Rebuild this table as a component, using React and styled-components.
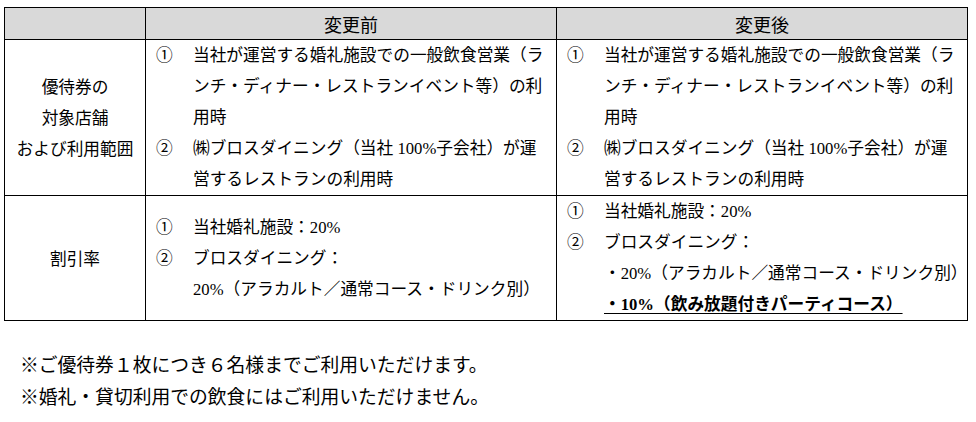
import styled, { createGlobalStyle } from "styled-components";

const GlobalStyle = createGlobalStyle`
  body {
    margin: 0;
    background: #fff;
    color: #000;
    font-family: "Liberation Serif", "Noto Sans CJK JP", serif;
  }
`;

const Page = styled.div`
  padding: 7px 0 0 4px;
`;

const Table = styled.div`
  display: grid;
  grid-template-columns: 141px 411px 411px;
  grid-template-rows: 32px 156px 125px;
  width: max-content;
  border-left: 1px solid #000;
  border-top: 1px solid #000;
`;

const Cell = styled.div`
  border-right: 1px solid #000;
  border-bottom: 1px solid #000;
  font-size: 16.7px;
  line-height: 31px;
  display: flex;
  flex-direction: column;
  justify-content: ${(p) => (p.$middle ? "center" : "flex-start")};
  padding-left: 10px;
`;

const HeadCell = styled.div`
  border-right: 1px solid #000;
  border-bottom: 1px solid #000;
  background: #d9d9d9;
  font-size: 18px;
  display: flex;
  align-items: center;
  justify-content: center;
  padding-top: 1px;
`;

const LabelCell = styled.div`
  border-right: 1px solid #000;
  border-bottom: 1px solid #000;
  font-size: 16.7px;
  line-height: 31px;
  display: flex;
  flex-direction: column;
  align-items: center;
  justify-content: center;
  padding-top: 2px;
`;

const Item = styled.div`
  display: grid;
  grid-template-columns: 37px 1fr;
`;

const Num = styled.span`
  white-space: nowrap;
`;

const Line = styled.span`
  display: block;
  white-space: nowrap;
  font-weight: ${(p) => (p.$bold ? 700 : 400)};
  text-decoration: ${(p) => (p.$bold ? "underline" : "none")};
  text-underline-offset: 3px;
  text-decoration-thickness: 1px;
`;

const Notes = styled.div`
  margin-top: 29px;
  padding-left: 16px;
  font-size: 18.8px;
  line-height: 32px;
`;

const scopeItems = [
  {
    n: "①",
    lines: [
      "当社が運営する婚礼施設での一般飲食営業（ラ",
      "ンチ・ディナー・レストランイベント等）の利",
      "用時",
    ],
  },
  {
    n: "②",
    lines: ["㈱ブロスダイニング（当社 100%子会社）が運", "営するレストランの利用時"],
  },
];

function Items({ items }) {
  return items.map((it) => (
    <Item key={it.n}>
      <Num>{it.n}</Num>
      <div>
        {it.lines.map((l, i) =>
          typeof l === "string" ? (
            <Line key={i}>{l}</Line>
          ) : (
            <Line key={i} $bold={l.bold}>
              {l.text}
            </Line>
          )
        )}
      </div>
    </Item>
  ));
}

export default function App() {
  return (
    <>
      <GlobalStyle />
      <Page>
        <Table>
          <HeadCell />
          <HeadCell>変更前</HeadCell>
          <HeadCell>変更後</HeadCell>

          <LabelCell>
            <span>優待券の</span>
            <span>対象店舗</span>
            <span>および利用範囲</span>
          </LabelCell>
          <Cell>
            <Items items={scopeItems} />
          </Cell>
          <Cell>
            <Items items={scopeItems} />
          </Cell>

          <LabelCell>
            <span>割引率</span>
          </LabelCell>
          <Cell $middle>
            <Items
              items={[
                { n: "①", lines: ["当社婚礼施設：20%"] },
                {
                  n: "②",
                  lines: ["ブロスダイニング：", "20%（アラカルト／通常コース・ドリンク別）"],
                },
              ]}
            />
          </Cell>
          <Cell>
            <Items
              items={[
                { n: "①", lines: ["当社婚礼施設：20%"] },
                {
                  n: "②",
                  lines: [
                    "ブロスダイニング：",
                    "・20%（アラカルト／通常コース・ドリンク別）",
                    { text: "・10%（飲み放題付きパーティコース）", bold: true },
                  ],
                },
              ]}
            />
          </Cell>
        </Table>
        <Notes>
          <div>※ご優待券１枚につき６名様までご利用いただけます。</div>
          <div>※婚礼・貸切利用での飲食にはご利用いただけません。</div>
        </Notes>
      </Page>
    </>
  );
}
